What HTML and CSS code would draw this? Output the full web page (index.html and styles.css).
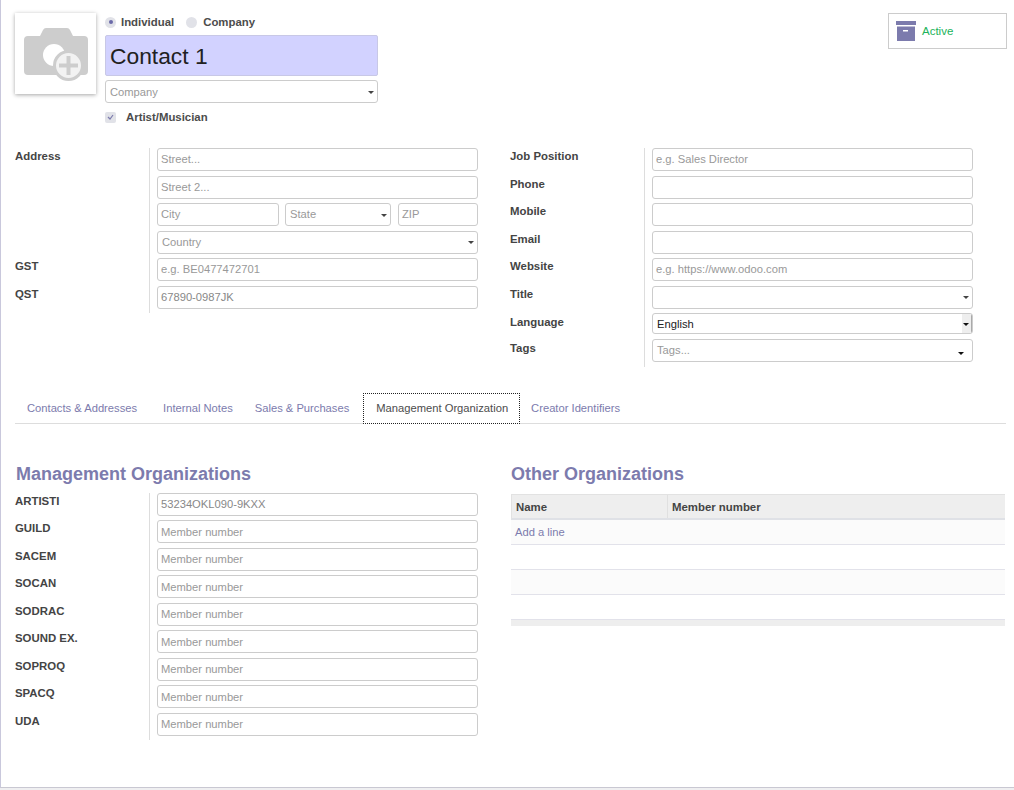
FILE: index.html
```html
<!DOCTYPE html>
<html lang="en">
<head>
<meta charset="utf-8">
<title>Contact 1</title>
<link rel="stylesheet" href="styles.css">
</head>
<body>
<div class="sheet">
  <header class="top">
    <div class="avatar">
      <svg width="81" height="81" viewBox="0 0 81 81" aria-hidden="true">
        <path class="cam" d="M13 23h12l3-6q1-2 3-2h21q2 0 3 2l3 6h11q4 0 4 4v31q0 4-4 4H13q-4 0-4-4V27q0-4 4-4z"/>
        <circle class="lens" cx="39" cy="42" r="11"/>
        <circle class="badge-ring" cx="53.500" cy="52.500" r="14"/>
        <path class="plus" d="M51.500 43h4v7.500H63v4h-7.500V62h-4v-7.500H44v-4h7.500z"/>
      </svg>
    </div>
    <div class="identity">
      <div class="radios">
        <span class="radio on"></span><b class="radio-label">Individual</b>
        <span class="radio"></span><b class="radio-label">Company</b>
      </div>
      <div class="name-field">Contact 1</div>
      <div class="field select company"><span class="ph">Company</span><i class="caret"></i></div>
      <div class="artist">
        <span class="check"><svg width="7" height="6" viewBox="0 0 7 6" aria-hidden="true"><path d="M1 3l2 2 3-4" fill="none" stroke="#7c7bad" stroke-width="1.200"/></svg></span>
        <b>Artist/Musician</b>
      </div>
    </div>
    <div class="status">
      <svg width="20" height="20" viewBox="0 0 20 20" aria-hidden="true">
        <path class="box" d="M0 0h20v4H0zM1 5.500h18V20H1z"/>
        <rect x="7" y="9" width="5" height="1.500" fill="#fff"/>
      </svg>
      <span>Active</span>
    </div>
  </header>

  <section class="columns info">
    <div class="group">
      <div class="row">
        <div class="label">Address</div>
        <div class="cell stack">
          <div class="field"><span class="ph">Street...</span></div>
          <div class="field"><span class="ph">Street 2...</span></div>
          <div class="triple">
            <div class="field city"><span class="ph">City</span></div>
            <div class="field select state"><span class="ph">State</span><i class="caret"></i></div>
            <div class="field zip"><span class="ph">ZIP</span></div>
          </div>
          <div class="field select"><span class="ph">Country</span><i class="caret"></i></div>
        </div>
      </div>
      <div class="row"><div class="label">GST</div><div class="cell"><div class="field"><span class="ph">e.g. BE0477472701</span></div></div></div>
      <div class="row"><div class="label">QST</div><div class="cell"><div class="field"><span class="val">67890-0987JK</span></div></div></div>
    </div>
    <div class="group">
      <div class="row"><div class="label">Job Position</div><div class="cell"><div class="field"><span class="ph">e.g. Sales Director</span></div></div></div>
      <div class="row"><div class="label">Phone</div><div class="cell"><div class="field"></div></div></div>
      <div class="row"><div class="label">Mobile</div><div class="cell"><div class="field"></div></div></div>
      <div class="row"><div class="label">Email</div><div class="cell"><div class="field"></div></div></div>
      <div class="row"><div class="label">Website</div><div class="cell"><div class="field"><span class="ph">e.g. https://www.odoo.com</span></div></div></div>
      <div class="row"><div class="label">Title</div><div class="cell"><div class="field select"><i class="caret"></i></div></div></div>
      <div class="row lang"><div class="label">Language</div><div class="cell"><div class="field native"><span>English</span><span class="spin"><i class="caret dark"></i></span></div></div></div>
      <div class="row tagrow"><div class="label">Tags</div><div class="cell"><div class="field select tags"><span class="ph">Tags...</span><i class="caret dark"></i></div></div></div>
    </div>
  </section>

  <nav class="tabs">
    <a class="tab wide">Contacts &amp; Addresses</a>
    <a class="tab narrow">Internal Notes</a>
    <a class="tab wide">Sales &amp; Purchases</a>
    <a class="tab active">Management Organization</a>
    <a class="tab last">Creator Identifiers</a>
  </nav>

  <section class="columns orgs">
    <div class="group">
      <h2>Management Organizations</h2>
      <div class="row"><div class="label">ARTISTI</div><div class="cell"><div class="field"><span class="val">53234OKL090-9KXX</span></div></div></div>
      <div class="row"><div class="label">GUILD</div><div class="cell"><div class="field"><span class="ph">Member number</span></div></div></div>
      <div class="row"><div class="label">SACEM</div><div class="cell"><div class="field"><span class="ph">Member number</span></div></div></div>
      <div class="row"><div class="label">SOCAN</div><div class="cell"><div class="field"><span class="ph">Member number</span></div></div></div>
      <div class="row"><div class="label">SODRAC</div><div class="cell"><div class="field"><span class="ph">Member number</span></div></div></div>
      <div class="row"><div class="label">SOUND EX.</div><div class="cell"><div class="field"><span class="ph">Member number</span></div></div></div>
      <div class="row"><div class="label">SOPROQ</div><div class="cell"><div class="field"><span class="ph">Member number</span></div></div></div>
      <div class="row"><div class="label">SPACQ</div><div class="cell"><div class="field"><span class="ph">Member number</span></div></div></div>
      <div class="row"><div class="label">UDA</div><div class="cell"><div class="field"><span class="ph">Member number</span></div></div></div>
    </div>
    <div class="group other">
      <h2>Other Organizations</h2>
      <div class="table">
        <div class="thead"><div class="th name">Name</div><div class="th">Member number</div></div>
        <div class="tr odd"><a class="add">Add a line</a></div>
        <div class="tr"></div>
        <div class="tr odd"></div>
        <div class="tr"></div>
        <div class="tfoot"></div>
      </div>
    </div>
  </section>
</div>
</body>
</html>
```

FILE: styles.css
```css
* { box-sizing: border-box; }
html, body { margin: 0; height: 100%; background: #efeff1; overflow: hidden; }
body {
  font-family: "Liberation Sans", Arial, sans-serif;
  font-size: 11.2px;
  color: #4c4c4c;
}
.sheet {
  height: 788px;
  background: #fff;
  border-left: 1px solid #c9c8dc;
  border-bottom: 1px solid #c9c8d2;
  padding: 13px 7px 0 14px;
}

/* header */
.top { display: flex; height: 135px; }
.avatar {
  width: 81px;
  height: 81px;
  background: #fff;
  box-shadow: 0 1px 4px rgba(0, 0, 0, .35);
  flex: none;
}
.avatar svg { display: block; }
.cam { fill: #cdcdcd; }
.lens { fill: #fff; }
.badge-ring { fill: #f2f2f2; stroke: #cdcdcd; stroke-width: 3; }
.plus { fill: #cdcdcd; }
.identity { width: 273px; margin-left: 9px; }
.radios { display: flex; align-items: center; height: 18px; font-size: 11.4px; }
.radio {
  width: 11px;
  height: 11px;
  border-radius: 50%;
  background: #e1e2e8;
  position: relative;
  flex: none;
}
.radio.on::after {
  content: "";
  position: absolute;
  left: 3.500px;
  top: 3.500px;
  width: 4px;
  height: 4px;
  border-radius: 50%;
  background: #6a69a8;
}
.radio-label { margin-left: 5px; margin-right: 12px; color: #4c4c4c; }
.radio-label:last-child { margin-left: 6px; margin-right: 0; }
.name-field {
  margin-top: 4px;
  height: 41px;
  background: #d2d2ff;
  border: 1px solid #c8c8e6;
  border-radius: 2px;
  padding-left: 4px;
  font-size: 22.8px;
  line-height: 40px;
  color: #212121;
}
.field.company { margin-top: 4px; padding-bottom: 0; }
.artist { display: flex; align-items: center; margin-top: 5.500px; height: 17px; font-size: 11.4px; }
.check {
  width: 11px;
  height: 11px;
  border-radius: 2px;
  background: #e1e2e8;
  display: flex;
  align-items: center;
  justify-content: center;
  margin-right: 10px;
}
.status {
  margin-left: auto;
  width: 119px;
  height: 36px;
  border: 1px solid #ccc;
  display: flex;
  align-items: center;
  padding-left: 7px;
  color: #21b35a;
  font-size: 11.5px;
}
.status svg { margin-right: 6px; }
.box { fill: #7c7bad; }

/* form groups */
.columns { display: grid; grid-template-columns: 495px 1fr; }
.row { display: flex; }
.label {
  width: 134px;
  flex: none;
  font-weight: 700;
  font-size: 11.4px;
  line-height: 14px;
  color: #444;
  padding-top: 1px;
}
.lang .label, .tagrow .label { padding-top: 2px; }
.cell {
  width: 329px;
  flex: none;
  border-left: 1px solid #ddd;
  padding: 0 0 4.500px 7px;
}
.stack { display: flex; flex-direction: column; gap: 4.500px; }
.field {
  height: 23px;
  border: 1px solid #ccc;
  border-radius: 3px;
  background: #fff;
  display: flex;
  align-items: center;
  padding: 0 3px 1px;
  line-height: 14px;
  position: relative;
  color: #888;
}
.orgs .field { padding-bottom: 0; }
.ph { color: #999; }
.val { color: #888; }
.select { padding-right: 12px; padding-left: 4px; }
.caret {
  position: absolute;
  right: 3px;
  top: 50%;
  margin-top: -1px;
  width: 0;
  height: 0;
  border-left: 3px solid transparent;
  border-right: 3px solid transparent;
  border-top: 3px solid #444;
}
.caret.dark { border-top-color: #111; }
.triple { display: flex; }
.city { width: 122px; }
.state { width: 106px; margin-left: 6px; }
.zip { width: 80px; margin-left: 7px; }
.lang .cell { padding-bottom: 5px; }
.native { height: 21px; color: #222; padding: 0 0 0 4px; justify-content: space-between; overflow: hidden; }
.spin { position: relative; width: 10px; height: 21px; background: #eee; border-right: 1px solid #aaa; flex: none; }
.spin .caret { right: 2px; }
.tags { align-items: flex-start; padding-top: 3px; }
.tags .caret { right: 8px; top: 12px; margin-top: 0; }

/* tabs */
.info { height: 245px; }
.tabs {
  display: flex;
  height: 31px;
  border-bottom: 1px solid #ddd;
  width: 991px;
}
.tab {
  padding: 0 12px;
  line-height: 30px;
  font-size: 11.2px;
  color: #7c7bad;
  white-space: nowrap;
}
.wide { padding-right: 14px; }
.narrow { padding-right: 10px; }
.last { padding-left: 11px; }
.active {
  height: 31px;
  color: #4c4c4c;
  border: 1px dotted #222;
  padding: 0 11px 0 12px;
  line-height: 29px;
  background: #fff;
}

/* organisations */
.orgs { margin-top: 38px; }
h2 {
  margin: 0 0 6.500px 1px;
  font-size: 18px;
  line-height: 24px;
  font-weight: 700;
  color: #7c7bad;
  height: 24px;
}
.table { width: 494px; margin-left: 1px; margin-top: 8px; }
.thead {
  display: flex;
  height: 26px;
  background: #eee;
  border-top: 1px solid #e2e2e2;
  border-bottom: 2px solid #dfe1e6;
  border-left: 1px solid #e2e2e2;
  font-size: 11.4px;
  font-weight: 700;
  color: #444;
}
.th { padding: 0 4px; line-height: 24px; }
.th.name { width: 156px; border-right: 1px solid #e0e0e0; }
.tr {
  height: 25px;
  border-bottom: 1px solid #e2e2ea;
  background: #fff;
  padding-left: 4px;
  line-height: 24px;
}
.tr.odd { background: #fbfbfb; }
.add { color: #7c7bad; font-size: 11.2px; }
.tfoot { height: 6px; background: #eee; }
```
